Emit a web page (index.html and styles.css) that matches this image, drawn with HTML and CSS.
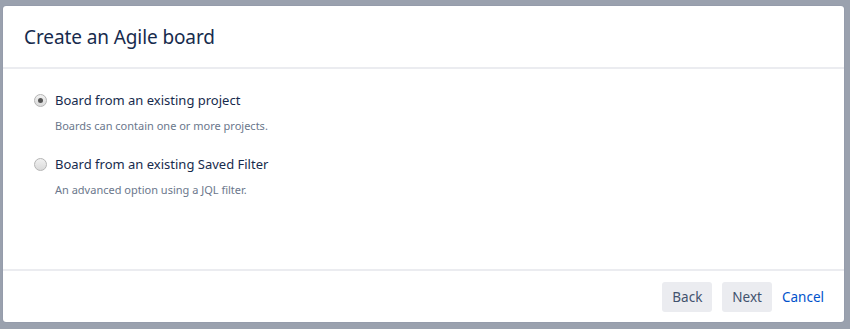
FILE: index.html
```html
<!DOCTYPE html>
<html>
<head>
<meta charset="utf-8">
<link rel="stylesheet" href="styles.css">
</head>
<body>
<div class="dialog">
  <div class="header"><h2 class="title">Create an Agile board</h2></div>
  <div class="content">
    <div class="option">
      <div class="row"><span class="radio checked"></span><span class="label">Board from an existing project</span></div>
      <div class="desc">Boards can contain one or more projects.</div>
    </div>
    <div class="option">
      <div class="row"><span class="radio"></span><span class="label">Board from an existing Saved Filter</span></div>
      <div class="desc">An advanced option using a JQL filter.</div>
    </div>
  </div>
  <div class="footer">
    <button class="btn">Back</button>
    <button class="btn">Next</button>
    <a class="link">Cancel</a>
  </div>
</div>
</body>
</html>
```
FILE: styles.css
```css
html, body { margin: 0; padding: 0; }
body {
  width: 850px; height: 329px;
  background: #9aa1ae;
  font-family: "Noto Sans", "Open Sans", sans-serif;
  color: #172b4d;
  padding: 6px 0 0 3px;
  box-sizing: border-box;
}
.dialog {
  width: 841px; height: 316px;
  background: #fff;
  border-radius: 3px;
  display: flex; flex-direction: column;
  box-shadow: 0 0 1px rgba(9,30,66,0.3);
}
.header {
  height: 61px;
  border-bottom: 2px solid #ebecf0;
  display: flex; align-items: center;
  padding: 0 21px;
  box-sizing: content-box;
}
.title { margin: 0; font-size: 19px; font-weight: 400; color: #172b4d; letter-spacing: -0.1px; }
.content { flex: 1; padding: 20px 31px; display: flex; flex-direction: column; gap: 20px; }
.option { display: flex; flex-direction: column; }
.row { display: flex; align-items: center; gap: 8px; height: 22px; }
.radio {
  width: 11px; height: 11px; border-radius: 50%;
  border: 1px solid #b5b5b5;
  background: linear-gradient(#f1f1f1, #dadada);
  box-sizing: content-box;
  position: relative;
}
.radio.checked::after {
  content: ""; position: absolute; left: 3px; top: 3px;
  width: 5px; height: 5px; border-radius: 50%; background: #555;
}
.label { font-size: 13px; color: #172b4d; }
.desc { font-size: 11px; color: #6b778c; margin-left: 21px; margin-top: 7px; }
.footer {
  height: 51px; border-top: 2px solid #ebecf0;
  display: flex; align-items: center; justify-content: flex-end;
  padding: 0 20px; gap: 10px;
}
.btn {
  font-family: inherit; font-size: 13.5px; color: #42526e;
  background: #ebecf0; border: none; border-radius: 3px;
  height: 30px; padding: 0 10px;
}
.link { font-size: 13.5px; color: #0052cc; margin-left: 0; }
```
